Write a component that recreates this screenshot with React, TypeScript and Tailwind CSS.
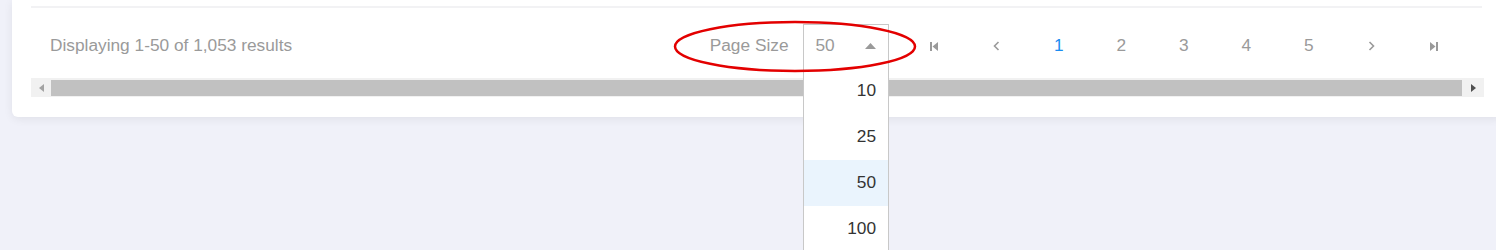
import { useState } from "react";

const PAGE_SIZES = [10, 25, 50, 100];
const PAGES = [1, 2, 3, 4, 5];

function FirstIcon() {
  return (
    <svg width="10" height="9" viewBox="0 0 10 9" fill="#9a9a9a">
      <rect x="1" y="0" width="2" height="9" />
      <path d="M9 0 L3.5 4.5 L9 9 Z" />
    </svg>
  );
}

function LastIcon() {
  return (
    <svg width="10" height="9" viewBox="0 0 10 9" fill="#9a9a9a">
      <path d="M1 0 L6.5 4.5 L1 9 Z" />
      <rect x="7" y="0" width="2" height="9" />
    </svg>
  );
}

function Chevron({ dir }: { dir: "left" | "right" }) {
  return (
    <svg width="7" height="10" viewBox="0 0 7 10" fill="none" stroke="#9a9a9a" strokeWidth="1.6">
      {dir === "left" ? <path d="M5.5 1 L1.5 5 L5.5 9" /> : <path d="M1.5 1 L5.5 5 L1.5 9" />}
    </svg>
  );
}

export default function App() {
  const [page] = useState(1);
  const [pageSize] = useState(50);

  return (
    <div
      className="relative h-[250px] w-[1496px] overflow-hidden bg-[#f0f1f9]"
      style={{ fontFamily: '"Liberation Sans", Arial, sans-serif' }}
    >
      {/* Card */}
      <div className="ml-[12px] w-[1491px] rounded-b-[6px] bg-white px-[19px] pb-[20px] pt-[6px] shadow-[0_2px_10px_rgba(0,0,0,0.07)]">
        <div className="h-[2px] w-[1451px] bg-[#f2f2f4]" />

        {/* Pagination row */}
        <div className="flex h-[70px] items-center pt-[6px]">
          <span className="pl-[19px] text-[17.3px] text-[#9a9a9a]">Displaying 1-50 of 1,053 results</span>
          <div className="ml-auto flex items-center">
            <span className="text-[17.3px] text-[#9a9a9a]">Page Size</span>
            <div className="ml-[14px] flex h-[45px] w-[86px] items-center justify-between border border-[#c8c8c8] pl-[12px] pr-[12px]">
              <span className="text-[17.3px] text-[#9a9a9a]">{pageSize}</span>
              <svg width="11" height="6" viewBox="0 0 11 6" fill="#9a9a9a">
                <path d="M0 6 L5.5 0 L11 6 Z" />
              </svg>
            </div>
            <div className="ml-[14px] mr-[19px] flex items-center">
              <div className="flex h-[40px] w-[62.5px] items-center justify-center">
                <FirstIcon />
              </div>
              <div className="flex h-[40px] w-[62.5px] items-center justify-center">
                <Chevron dir="left" />
              </div>
              {PAGES.map((p) => (
                <div
                  key={p}
                  className={`flex h-[40px] w-[62.5px] items-center justify-center text-[17.3px] ${
                    p === page ? "text-[#1a8cf0]" : "text-[#9a9a9a]"
                  }`}
                >
                  {p}
                </div>
              ))}
              <div className="flex h-[40px] w-[62.5px] items-center justify-center">
                <Chevron dir="right" />
              </div>
              <div className="flex h-[40px] w-[62.5px] items-center justify-center">
                <LastIcon />
              </div>
            </div>
          </div>
        </div>

        {/* Horizontal scrollbar */}
        <div className="flex h-[19px] w-[1453px] items-center bg-[#f1f1f1]">
          <div className="flex h-full w-[20px] items-center justify-center">
            <svg width="5" height="8" viewBox="0 0 5 8" fill="#a3a3a3">
              <path d="M5 0 L0 4 L5 8 Z" />
            </svg>
          </div>
          <div className="h-[16px] flex-1 bg-[#c1c1c1]" />
          <div className="flex h-full w-[22px] items-center justify-center">
            <svg width="5" height="8" viewBox="0 0 5 8" fill="#505050">
              <path d="M0 0 L5 4 L0 8 Z" />
            </svg>
          </div>
        </div>
      </div>

      {/* Open page-size menu */}
      <div className="absolute left-[803px] top-[68px] w-[86px] border-x border-[#c8c8c8] bg-white">
        {PAGE_SIZES.map((s) => (
          <div
            key={s}
            className={`flex h-[46px] items-center justify-end pr-[12px] text-[17.3px] text-[#333] ${
              s === pageSize ? "bg-[#eaf4fd]" : ""
            }`}
          >
            {s}
          </div>
        ))}
      </div>

      {/* Annotation ellipse */}
      <svg className="absolute left-[672px] top-[19px]" width="250" height="56" viewBox="0 0 250 56">
        <ellipse cx="123" cy="27.5" rx="120" ry="24.5" fill="none" stroke="#e30000" strokeWidth="2.5" />
      </svg>
    </div>
  );
}
